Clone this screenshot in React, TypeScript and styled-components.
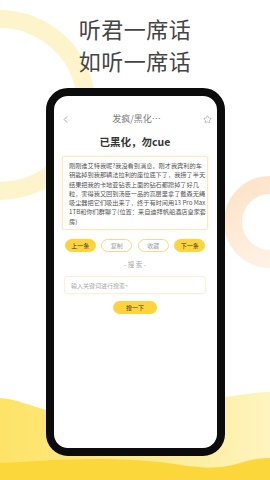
import styled, { createGlobalStyle } from "styled-components";
import { ChevronLeft, Star } from "lucide-react";

const GlobalStyle = createGlobalStyle`
  html, body {
    margin: 0;
    padding: 0;
    background: #ffffff;
  }
  * {
    box-sizing: border-box;
  }
`;

const YELLOW = "#fdd43e";
const CJK = `"Noto Sans CJK SC", "Noto Sans", sans-serif`;

// wrapped the same way the screenshot wraps it
const passageLines = [
  "刚刚谁艾特我呢?我没看到消息，刚才我宾利的车",
  "钥匙掉到我那辆法拉利的座位底下了，我捞了半天",
  "结果把我的卡地亚钻表上面的钻石都蹭掉了好几",
  "粒，害得我又回到汤臣一品的高层里拿了戴森无绳",
  "吸尘器把它们吸出来了，终于有时间用13 Pro Max",
  "1TB和你们群聊了(位置：来自迪拜帆船酒店皇家套",
  "房)",
];

const Backdrop = () => (
  <BackdropSvg viewBox="0 0 270 480" width="270" height="480">
    <defs>
      <linearGradient id="backWave" x1="0" y1="0" x2="1" y2="0">
        <stop offset="0" stopColor="#fde366" />
        <stop offset="0.6" stopColor="#fdec96" />
        <stop offset="1" stopColor="#fef4bf" />
      </linearGradient>
      <linearGradient id="peachRing" x1="0" y1="0" x2="0.6" y2="1">
        <stop offset="0" stopColor="#fde3c8" />
        <stop offset="1" stopColor="#fef2e6" />
      </linearGradient>
    </defs>
    <circle cx="0" cy="105" r="86" fill="none" stroke="#fdf4cc" strokeWidth="18" />
    <circle cx="270" cy="222" r="37" fill="none" stroke="url(#peachRing)" strokeWidth="18" />
    <path
      d="M0,398 C25,400 40,412 70,414 C120,418 180,402 225,397 C245,394 260,392 270,392 L270,480 L0,480 Z"
      fill="url(#backWave)"
    />
    <path
      d="M0,463 C50,460 110,456 160,462 C195,467 215,471 240,463 C252,459 262,458 270,458 L270,480 L0,480 Z"
      fill="#fcd73c"
    />
  </BackdropSvg>
);

export default function App() {
  return (
    <>
      <GlobalStyle />
      <Page>
        <Backdrop />
        <Content>
          <Slogan>
            <span>听君一席话</span>
            <span>如听一席话</span>
          </Slogan>
          <Phone>
            <Header>
              <ChevronLeft size={11} strokeWidth={1.4} color="#777" />
              <HeaderTitle>发疯/黑化⋯</HeaderTitle>
              <Star size={9} strokeWidth={1.4} color="#888" />
            </Header>
            <Headline>已黑化，勿cue</Headline>
            <TextCard>
              {passageLines.map((line) => (
                <PassageLine key={line}>{line}</PassageLine>
              ))}
            </TextCard>
            <ButtonRow>
              <PillButton $filled>上一条</PillButton>
              <PillButton>复制</PillButton>
              <PillButton>收藏</PillButton>
              <PillButton $filled>下一条</PillButton>
            </ButtonRow>
            <SectionLabel>- 搜 索 -</SectionLabel>
            <SearchBox placeholder="输入关键词进行搜索~" />
            <SearchButton>搜一下</SearchButton>
          </Phone>
        </Content>
      </Page>
    </>
  );
}

const Page = styled.div`
  position: relative;
  width: 270px;
  height: 480px;
  overflow: hidden;
  background: #ffffff;
  font-family: ${CJK};
`;

const BackdropSvg = styled.svg`
  position: absolute;
  left: 0;
  top: 0;
  z-index: 0;
`;

const Content = styled.div`
  position: relative;
  z-index: 1;
  display: flex;
  flex-direction: column;
  align-items: center;
`;

const Slogan = styled.div`
  display: flex;
  flex-direction: column;
  align-items: center;
  padding-top: 12px;
  font-size: 22px;
  line-height: 32px;
  letter-spacing: 0.5px;
  color: #444444;
`;

const Phone = styled.div`
  margin-top: 12px;
  width: 179px;
  height: 368px;
  border: 8px solid #0c0c0c;
  border-radius: 22px;
  background: #ffffff;
  display: flex;
  flex-direction: column;
  align-items: center;
  padding: 17px 0 0;
`;

const Header = styled.div`
  width: 100%;
  height: 12px;
  display: flex;
  align-items: center;
  justify-content: space-between;
  padding: 0 5px 0 6px;
`;

const HeaderTitle = styled.div`
  font-size: 9px;
  color: #777777;
  line-height: 12px;
`;

const Headline = styled.div`
  margin-top: 10px;
  font-size: 10.5px;
  line-height: 14px;
  font-weight: 700;
  color: #333333;
`;

const TextCard = styled.div`
  margin-top: 7px;
  width: 146px;
  padding: 4px 0 3px 6px;
  border: 1px solid #f7ebc4;
  border-radius: 2px;
  box-shadow: 0 0 3px rgba(248, 222, 140, 0.45);
  background: #ffffff;
`;

const PassageLine = styled.div`
  font-size: 6.2px;
  line-height: 9.3px;
  color: #555555;
  white-space: nowrap;
`;

const ButtonRow = styled.div`
  margin-top: 9px;
  display: flex;
  gap: 5.5px;
`;

const PillButton = styled.div<{ $filled?: boolean }>`
  width: 31px;
  height: 13px;
  border-radius: 7px;
  display: flex;
  align-items: center;
  justify-content: center;
  font-size: 6px;
  background: ${({ $filled }) => ($filled ? YELLOW : "#ffffff")};
  border: 1px solid ${({ $filled }) => ($filled ? YELLOW : "#f4dc80")};
  color: ${({ $filled }) => ($filled ? "#333333" : "#a0a0a0")};
`;

const SectionLabel = styled.div`
  margin-top: 7px;
  font-size: 6.5px;
  line-height: 10px;
  color: #a8a8a8;
`;

const SearchBox = styled.input`
  margin-top: 7px;
  width: 142px;
  height: 18px;
  border: 1px solid #f6f0dc;
  border-radius: 4px;
  padding: 0 6px;
  font-family: ${CJK};
  font-size: 6px;
  outline: none;
  box-shadow: 0 0 2px rgba(245, 230, 180, 0.4);
  &::placeholder {
    color: #a8a8a8;
  }
`;

const SearchButton = styled.div`
  margin-top: 7px;
  width: 44px;
  height: 13px;
  border-radius: 7px;
  background: ${YELLOW};
  display: flex;
  align-items: center;
  justify-content: center;
  font-size: 6px;
  color: #333333;
`;
